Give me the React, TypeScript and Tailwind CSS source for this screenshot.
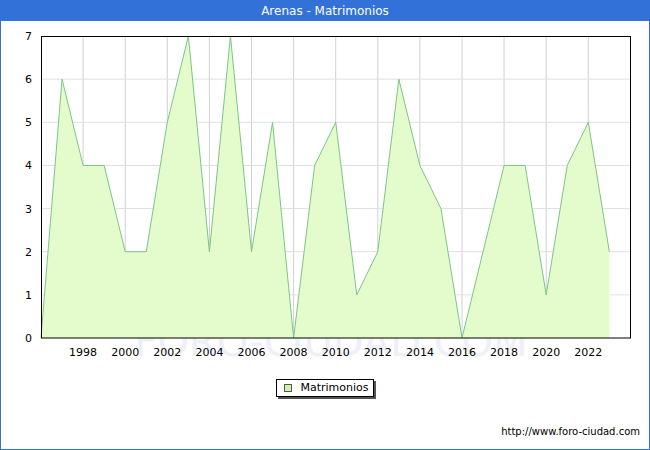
const values = [0, 6, 4, 4, 2, 2, 5, 7, 2, 7, 2, 5, 0, 4, 5, 1, 2, 6, 4, 3, 0, 2, 4, 4, 1, 4, 5, 2];

const X0 = 40;
const STEP = 21.05;
const Y0 = 317;
const UNIT = 43.14;

function Chart() {
  const pts = values.map((v, i) => `${X0 + i * STEP},${Y0 - v * UNIT}`);
  const lastX = X0 + (values.length - 1) * STEP;
  const area = `${X0},${Y0} ${pts.join(" ")} ${lastX},${Y0}`;
  const years = [1998, 2000, 2002, 2004, 2006, 2008, 2010, 2012, 2014, 2016, 2018, 2020, 2022];
  return (
    <svg width="648" height="345" className="block" style={{ fontFamily: "'DejaVu Sans', sans-serif" }}>
      <text x="330" y="335" fontSize="40" fill="#eef0f8" textAnchor="middle" fontWeight="400">
        FORO-CIUDAD.COM
      </text>
      {years.map((y) => {
        const x = X0 + (y - 1996) * STEP;
        return <line key={y} x1={x} y1={15} x2={x} y2={Y0} stroke="#d0d0d0" strokeWidth="1" />;
      })}
      {[1, 2, 3, 4, 5, 6].map((v) => (
        <line key={v} x1={X0} y1={Y0 - v * UNIT} x2={630} y2={Y0 - v * UNIT} stroke="#e0e0e0" strokeWidth="1" />
      ))}
      <polygon points={area} fill="#e4fccc" />
      <polyline points={pts.join(" ")} fill="none" stroke="#7cc48a" strokeWidth="1" />
      <rect x={40.5} y={15.5} width={589} height={301.5} fill="none" stroke="#000" strokeWidth="1" />
      {[0, 1, 2, 3, 4, 5, 6, 7].map((v) => (
        <text key={v} x={31} y={Y0 - v * UNIT + 4} fontSize="11" textAnchor="end" fill="#000">
          {v}
        </text>
      ))}
      {years.map((y) => (
        <text key={y} x={X0 + (y - 1996) * STEP} y={335} fontSize="11" textAnchor="middle" fill="#000">
          {y}
        </text>
      ))}
    </svg>
  );
}

export default function App() {
  return (
    <div className="w-[650px] h-[450px] border border-[#3272d8] bg-white flex flex-col" style={{ fontFamily: "'DejaVu Sans', sans-serif" }}>
      <div className="h-[20px] bg-[#3272d8] text-white text-[12px] flex items-center justify-center">
        Arenas - Matrimonios
      </div>
      <Chart />
      <div className="flex justify-center mt-[13px] pr-[1px]">
        <div className="relative w-[98px] h-[18px]">
          <div className="absolute left-[2px] top-[2px] w-full h-full bg-[#555]" />
          <div className="absolute inset-0 border border-black bg-white flex items-center gap-[9px] pl-[7px] text-[11px]">
            <span className="w-[8px] h-[8px] border border-[#555] bg-[#ccf5a6]" />
            Matrimonios
          </div>
        </div>
      </div>
      <div className="mt-auto mb-[10px] pr-[9px] text-right text-[10px] text-black">http://www.foro-ciudad.com</div>
    </div>
  );
}
